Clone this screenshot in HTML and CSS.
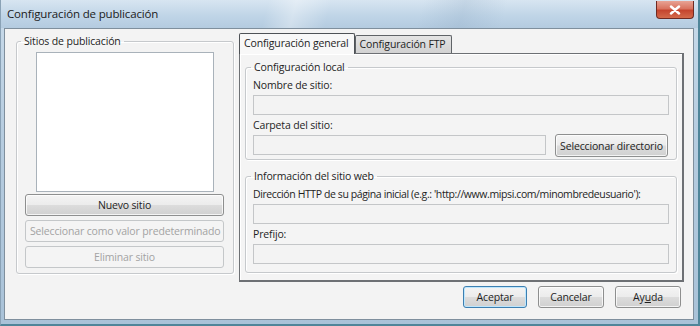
FILE: index.html
```html
<!DOCTYPE html>
<html lang="es">
<head>
<meta charset="utf-8">
<title>Configuración de publicación</title>
<link rel="stylesheet" href="styles.css">
</head>
<body>
<div class="window">
  <div class="titlebar">
    <span class="title">Configuración de publicación</span>
    <button class="close" aria-label="Cerrar">
      <svg width="12" height="10" viewBox="0 0 12 10"><path d="M2 1.5 L10 8.5 M10 1.5 L2 8.5" stroke="#fff" stroke-width="2.4" stroke-linecap="round"/></svg>
    </button>
  </div>
  <div class="client">
    <div class="main">
      <fieldset class="group sites">
        <legend>Sitios de publicación</legend>
        <div class="listbox"></div>
        <div class="site-buttons">
          <button class="btn">Nuevo sitio</button>
          <button class="btn" disabled>Seleccionar como valor predeterminado</button>
          <button class="btn" disabled>Eliminar sitio</button>
        </div>
      </fieldset>
      <div class="tabs">
        <div class="tabstrip">
          <div class="tab active">Configuración general</div>
          <div class="tab">Configuración FTP</div>
        </div>
        <div class="panel">
          <fieldset class="group local">
            <legend>Configuración local</legend>
            <label class="lbl">Nombre de sitio:</label>
            <div class="input"></div>
            <label class="lbl">Carpeta del sitio:</label>
            <div class="row">
              <div class="input grow"></div>
              <button class="btn dir">Seleccionar directorio</button>
            </div>
          </fieldset>
          <fieldset class="group web">
            <legend>Información del sitio web</legend>
            <label class="lbl long">Dirección HTTP de su página inicial (e.g.: 'http://www.mipsi.com/minombredeusuario'):</label>
            <div class="input"></div>
            <label class="lbl">Prefijo:</label>
            <div class="input"></div>
          </fieldset>
        </div>
      </div>
    </div>
    <div class="footer">
      <button class="btn foot default">Aceptar</button>
      <button class="btn foot">Cancelar</button>
      <button class="btn foot">Ay<u>u</u>da</button>
    </div>
  </div>
</div>
</body>
</html>
```
FILE: styles.css
```css
* { box-sizing: border-box; }
html, body { margin: 0; padding: 0; }
body {
  width: 700px;
  height: 326px;
  overflow: hidden;
  font-family: "Open Sans", "Noto Sans", sans-serif;
  font-size: 10.5px;
  letter-spacing: -0.15px;
  color: #1e1e1e;
  background: #fff;
}
.window {
  width: 700px;
  height: 326px;
  display: flex;
  flex-direction: column;
  background: linear-gradient(180deg, #c9dbea 0%, #b7cde0 40%, #a9c2d8 100%);
  border-right: 2px solid #4f8599;
  border-bottom: 2px solid #4f8599;
  border-left: 1px solid #8aa2b6;
}
.titlebar {
  height: 28px;
  flex: none;
  display: flex;
  align-items: flex-start;
  justify-content: space-between;
  padding: 0 4px 0 6px;
  background:
    linear-gradient(105deg, transparent 0 38%, rgba(255,255,255,0.35) 42%, transparent 47% 60%, rgba(120,150,180,0.18) 66%, transparent 72%),
    linear-gradient(180deg, #d7e5f1 0%, #c0d5e7 55%, #b4cbe0 100%);
}
.title {
  margin-top: 6px;
  font-size: 11.5px;
  color: #1b1b1b;
}
.close {
  margin-top: 1px;
  width: 38px;
  height: 18px;
  border: 1px solid #6f2a22;
  border-top: none;
  border-radius: 0 0 4px 4px;
  background: linear-gradient(180deg, #e8a394 0%, #d9735f 45%, #c5452e 55%, #d46a4a 100%);
  display: flex;
  align-items: center;
  justify-content: center;
  padding: 0;
}
.client {
  flex: 1;
  margin: 0 4px 4px 3px;
  background: #f3f3f3;
  border: 1px solid #7f8f9d;
  display: flex;
  flex-direction: column;
  padding: 4px 9px 0 11px;
}
.main {
  display: flex;
  gap: 5px;
}
.group {
  margin: 0;
  border: 1px solid #c6c9cc;
  border-radius: 3px;
  box-shadow: inset 1px 1px 0 #fff, 1px 1px 0 #fff;
  padding: 0;
  min-width: 0;
}
.group legend {
  padding: 0 3px;
  line-height: 14px;
  height: 14px;
}
.sites {
  width: 218px;
  height: 240px;
  margin-top: 1px;
  padding: 4px 9px 0 8px;
}
.sites legend { margin-left: -4px; }
.listbox {
  width: 178px;
  height: 140px;
  margin-left: 11px;
  background: #fff;
  border: 1px solid #a9b2ba;
}
.site-buttons {
  display: flex;
  flex-direction: column;
  gap: 4px;
  margin-top: 2px;
}
.btn {
  font-family: inherit;
  font-size: 10.5px;
  letter-spacing: -0.15px;
  color: #1e1e1e;
  height: 22px;
  padding: 0 4px;
  white-space: nowrap;
  border: 1px solid #8e8f8f;
  border-radius: 3px;
  background: linear-gradient(180deg, #f4f4f4 0%, #ececec 48%, #dcdcdc 52%, #d0d0d0 100%);
  box-shadow: inset 0 0 0 1px rgba(255,255,255,0.75);
}
.btn:disabled {
  color: #a3a3a3;
  border-color: #c4c7c9;
  background: #f4f4f4;
  box-shadow: none;
}
.tabs {
  flex: 1;
  display: flex;
  flex-direction: column;
  width: 444px;
}
.tabstrip {
  display: flex;
  align-items: flex-end;
  height: 20px;
  position: relative;
  z-index: 1;
}
.tab {
  height: 18px;
  padding: 0 5px 0 4px;
  border: 1px solid #5f6367;
  border-bottom: none;
  border-radius: 2px 2px 0 0;
  background: linear-gradient(180deg, #e4e4e4 0%, #d2d2d2 100%);
  line-height: 17px;
}
.tab.active {
  height: 21px;
  line-height: 19px;
  background: #f8f8f8;
  margin-bottom: -1px;
  border-color: #4e5256;
}
.panel {
  height: 229px;
  border: 1px solid #6d7074;
  border-right-width: 2px;
  border-bottom-width: 2px;
  background: #f4f4f4;
  box-shadow: inset 1px 1px 0 #fff;
  padding: 6px 5px 0 5px;
  display: flex;
  flex-direction: column;
  gap: 9px;
}
.local { height: 100px; padding: 4px 7px 0 7px; }
.web { height: 104px; padding: 4px 7px 0 7px; }
.local legend, .web legend { margin-left: -2px; }
.lbl {
  display: block;
  height: 15px;
  line-height: 15px;
  margin-bottom: 2px;
}
.lbl.long { letter-spacing: -0.4px; white-space: nowrap; }
.input {
  height: 20px;
  border: 1px solid #c4c6c8;
  background: #f3f3f3;
  margin-bottom: 3px;
}
.row {
  display: flex;
  align-items: flex-start;
  gap: 9px;
}
.grow { flex: 1; }
.dir {
  width: 113px;
  height: 23px;
  margin-top: -1px;
  margin-right: 1px;
}
.footer {
  display: flex;
  justify-content: flex-end;
  gap: 11px;
  margin-top: 4px;
  padding-right: 3px;
}
.foot {
  width: 66px;
  height: 22px;
}
.foot.default {
  width: 64px;
  border-color: #3c7fb1;
  box-shadow: inset 0 0 0 1px #bde6fd;
}
u { text-decoration: underline; }
```
